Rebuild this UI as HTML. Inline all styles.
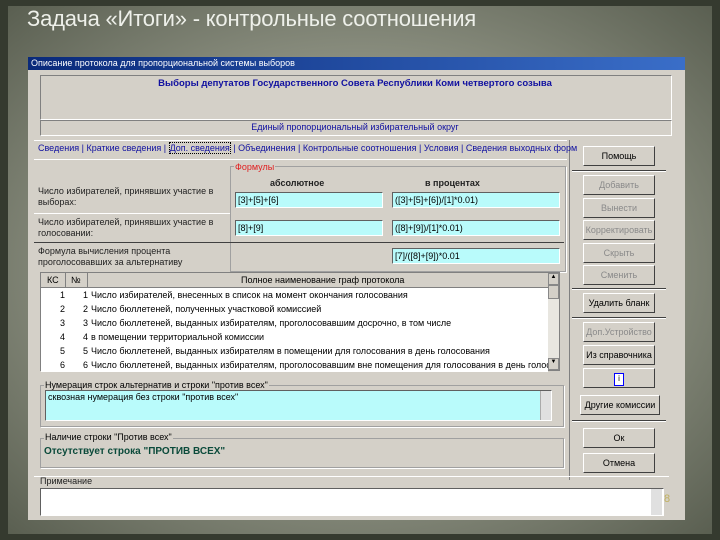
<!DOCTYPE html><html><head><meta charset="utf-8"><style>
body{margin:0;width:720px;height:540px;overflow:hidden;background:#353a2f;font-family:"Liberation Sans",sans-serif;font-size:9px;}
.a{position:absolute}
.bg{left:8px;top:6px;width:704px;height:528px;background:radial-gradient(ellipse at 50% 50%,#a3a797 0%,#8b8f80 55%,#5a5f51 100%);}
.win{left:28px;top:57px;width:657px;height:463px;background:#d4d0c8;}
.tb{left:28px;top:57px;width:657px;height:13px;background:linear-gradient(90deg,#0a2a7a,#3a6ec8);color:#fff;font-size:9px;line-height:13px;padding-left:3px;box-sizing:border-box}
.sunk{border:1px solid;border-color:#808080 #fff #fff #808080}
.btn{position:absolute;left:583px;width:72px;height:20px;border:1px solid;border-color:#fff #404040 #404040 #fff;box-sizing:border-box;text-align:center;line-height:18px;font-size:9px;color:#000;background:#d4d0c8}
.dis{color:#8a8a8a}
.in{position:absolute;background:#b9fbfb;border:1px solid;border-color:#606060 #fff #fff #606060;box-sizing:border-box;font-size:9px;line-height:14px;padding-left:2px}
.lab{position:absolute;font-size:9px;color:#222;line-height:11px}
.row{position:absolute;left:41px;width:507px;height:14px;background:#fff;border-bottom:1px dotted #333;font-size:9px;line-height:14px}
.row span{position:absolute}
.grp{position:absolute;border:1px solid #a0a0a0;box-shadow:1px 1px 0 #fff}
.gl{position:absolute;background:#d4d0c8;font-size:9px;padding:0 1px}
.hr{position:absolute;left:572px;width:94px;height:1px;background:#404040;border-bottom:1px solid #fff}
</style></head><body>
<div class="a bg"></div>
<div class="a" style="left:27px;top:6px;color:#eef0ea;font-size:22px;letter-spacing:-0.2px">Задача «Итоги» - контрольные соотношения</div>
<div class="a win"></div>
<div class="a tb">Описание протокола для пропорциональной системы выборов</div>
<div class="a sunk" style="left:40px;top:75px;width:630px;height:43px"></div>
<div class="a" style="left:40px;top:78px;width:630px;text-align:center;color:#1010a0;font-weight:bold;font-size:9.5px">Выборы депутатов Государственного Совета Республики Коми четвертого созыва</div>
<div class="a sunk" style="left:40px;top:120px;width:630px;height:14px"></div>
<div class="a" style="left:40px;top:122px;width:630px;text-align:center;color:#1010a0;font-size:9px">Единый пропорциональный избирательный округ</div>
<div class="a" style="left:34px;top:140px;width:533px;height:1px;background:#fff"></div>
<div class="a" style="left:569px;top:140px;width:1px;height:340px;background:#808080"></div>
<div class="a" style="left:38px;top:143px;font-size:9px;color:#1010a0;white-space:nowrap">Сведения | Краткие сведения | <span style="border:1px dotted #000;color:#1010a0">Доп. сведения</span> | Объединения | Контрольные соотношения | Условия | Сведения выходных форм</div>
<div class="a" style="left:34px;top:159px;width:533px;height:1px;background:#fff"></div>
<div class="grp" style="left:230px;top:166px;width:334px;height:104px"></div>
<div class="gl" style="left:234px;top:162px;color:#e02020">Формулы</div>
<div class="a" style="left:230px;top:166px;width:1px;height:104px;background:#a0a0a0"></div>
<div class="lab" style="left:270px;top:178px;font-weight:bold">абсолютное</div>
<div class="lab" style="left:425px;top:178px;font-weight:bold">в процентах</div>
<div class="in" style="left:235px;top:192px;width:148px;height:16px">[3]+[5]+[6]</div>
<div class="in" style="left:392px;top:192px;width:168px;height:16px">([3]+[5]+[6])/[1]*0.01)</div>
<div class="in" style="left:235px;top:220px;width:148px;height:16px">[8]+[9]</div>
<div class="in" style="left:392px;top:220px;width:168px;height:16px">([8]+[9])/[1]*0.01)</div>
<div class="in" style="left:392px;top:248px;width:168px;height:16px">[7]/([8]+[9])*0.01</div>
<div class="lab" style="left:38px;top:186px">Число избирателей, принявших участие в<br>выборах:</div>
<div class="a" style="left:34px;top:213px;width:196px;height:1px;background:#fff"></div>
<div class="lab" style="left:38px;top:217px">Число избирателей, принявших участие в<br>голосовании:</div>
<div class="a" style="left:34px;top:242px;width:530px;height:1px;background:#404040"></div>
<div class="lab" style="left:38px;top:246px">Формула вычисления процента<br>проголосовавших за альтернативу</div>
<div class="a" style="left:40px;top:272px;width:520px;height:99px;background:#fff;border:1px solid #808080;box-sizing:border-box"></div>
<div class="a" style="left:41px;top:273px;width:507px;height:14px;background:#d4d0c8;border-bottom:1px solid #808080;font-size:9px;line-height:14px">
<span class="a" style="left:6px">КС</span><span class="a" style="left:30px">№</span><span class="a" style="left:46px;top:0;width:1px;height:14px;background:#808080"></span><span class="a" style="left:24px;top:0;width:1px;height:14px;background:#808080"></span><span class="a" style="left:200px">Полное наименование граф протокола</span></div>
<div class="a" style="left:548px;top:273px;width:11px;height:97px;background:#e8e6e0"></div>
<div class="a" style="left:548px;top:273px;width:11px;height:12px;background:#d4d0c8;border:1px solid #888;box-sizing:border-box;font-size:6px;text-align:center">▲</div>
<div class="a" style="left:548px;top:285px;width:11px;height:14px;background:#d4d0c8;border:1px solid #888;box-sizing:border-box"></div>
<div class="a" style="left:548px;top:358px;width:11px;height:12px;background:#d4d0c8;border:1px solid #888;box-sizing:border-box;font-size:6px;text-align:center">▼</div>
<div class="row" style="top:288px"><span style="left:19px">1</span><span style="left:42px">1</span><span style="left:50px">Число избирателей, внесенных в список на момент окончания голосования</span></div>
<div class="row" style="top:302px"><span style="left:19px">2</span><span style="left:42px">2</span><span style="left:50px">Число бюллетеней, полученных участковой комиссией</span></div>
<div class="row" style="top:316px"><span style="left:19px">3</span><span style="left:42px">3</span><span style="left:50px">Число бюллетеней, выданных избирателям, проголосовавшим досрочно, в том числе</span></div>
<div class="row" style="top:330px"><span style="left:19px">4</span><span style="left:42px">4</span><span style="left:50px">в помещении территориальной комиссии</span></div>
<div class="row" style="top:344px"><span style="left:19px">5</span><span style="left:42px">5</span><span style="left:50px">Число бюллетеней, выданных избирателям в помещении для голосования в день голосования</span></div>
<div class="row" style="top:358px;border:none;overflow:hidden;white-space:nowrap"><span style="left:19px">6</span><span style="left:42px">6</span><span style="left:50px">Число бюллетеней, выданных избирателям, проголосовавшим вне помещения для голосования в день голос</span></div>
<div class="grp" style="left:40px;top:385px;width:522px;height:40px"></div>
<div class="gl" style="left:44px;top:380px">Нумерация строк альтернатив и строки "против всех"</div>
<div class="in" style="left:45px;top:390px;width:507px;height:31px;line-height:12px">сквозная нумерация без строки "против всех"</div>
<div class="a" style="left:540px;top:391px;width:10px;height:29px;background:#e0e0e0;border-left:1px solid #aaa"></div>
<div class="grp" style="left:40px;top:438px;width:522px;height:28px"></div>
<div class="gl" style="left:44px;top:432px">Наличие строки "Против всех"</div>
<div class="a" style="left:44px;top:446px;font-weight:bold;color:#0a4a3a;font-size:10px">Отсутствует строка "ПРОТИВ ВСЕХ"</div>
<div class="a" style="left:34px;top:476px;width:635px;height:1px;background:#fff"></div>
<div class="lab" style="left:40px;top:476px">Примечание</div>
<div class="a" style="left:40px;top:488px;width:624px;height:28px;background:#fff;border:1px solid;border-color:#606060 #fff #fff #606060;box-sizing:border-box"></div>
<div class="a" style="left:651px;top:489px;width:11px;height:26px;background:#e0e0e0"></div>
<div class="btn" style="top:146px">Помощь</div>
<div class="hr" style="top:170px"></div>
<div class="btn dis" style="top:175px">Добавить</div>
<div class="btn dis" style="top:198px">Вынести</div>
<div class="btn dis" style="top:220px">Корректировать</div>
<div class="btn dis" style="top:243px">Скрыть</div>
<div class="btn dis" style="top:265px">Сменить</div>
<div class="hr" style="top:288px"></div>
<div class="btn" style="top:293px">Удалить бланк</div>
<div class="hr" style="top:317px"></div>
<div class="btn dis" style="top:322px">Доп.Устройство</div>
<div class="btn" style="top:345px">Из справочника</div>
<div class="btn" style="top:368px"><span style="display:inline-block;width:8px;height:11px;border:1px solid #00f;background:#fff;font-size:8px;line-height:10px;margin-top:3px">i</span></div>
<div class="btn" style="left:580px;width:80px;top:395px">Другие комиссии</div>
<div class="hr" style="top:420px"></div>
<div class="btn" style="top:428px">Ок</div>
<div class="btn" style="top:453px">Отмена</div>
<div class="a" style="left:664px;top:493px;color:#c0b060;font-size:11px">8</div>
</body></html>
